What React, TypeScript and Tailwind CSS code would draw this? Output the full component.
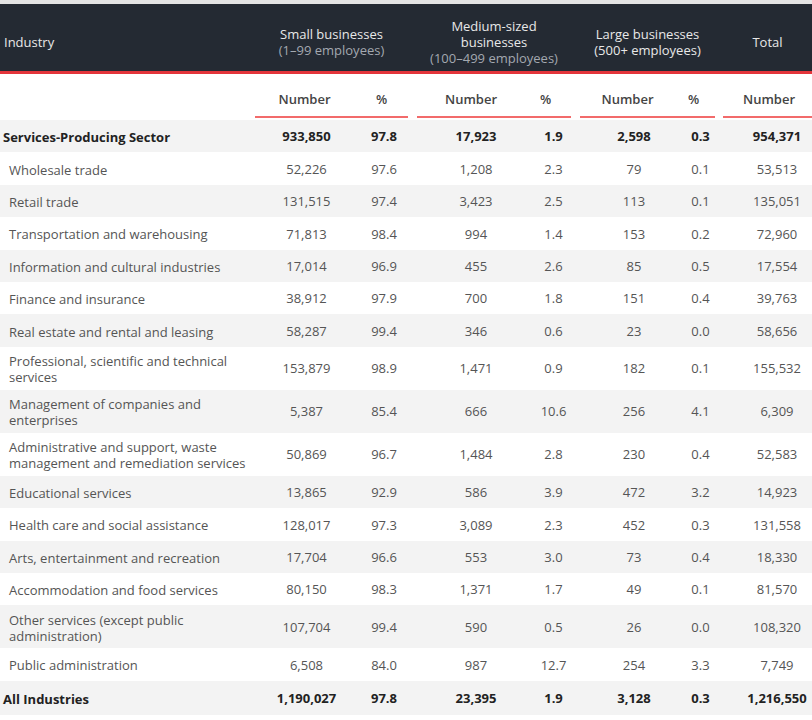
import React from "react";

type Row = {
  label: string;
  bold?: boolean;
  double?: boolean;
  v: [string, string, string, string, string, string, string];
};

const rows: Row[] = [
  { label: "Services-Producing Sector", bold: true, v: ["933,850", "97.8", "17,923", "1.9", "2,598", "0.3", "954,371"] },
  { label: "Wholesale trade", v: ["52,226", "97.6", "1,208", "2.3", "79", "0.1", "53,513"] },
  { label: "Retail trade", v: ["131,515", "97.4", "3,423", "2.5", "113", "0.1", "135,051"] },
  { label: "Transportation and warehousing", v: ["71,813", "98.4", "994", "1.4", "153", "0.2", "72,960"] },
  { label: "Information and cultural industries", v: ["17,014", "96.9", "455", "2.6", "85", "0.5", "17,554"] },
  { label: "Finance and insurance", v: ["38,912", "97.9", "700", "1.8", "151", "0.4", "39,763"] },
  { label: "Real estate and rental and leasing", v: ["58,287", "99.4", "346", "0.6", "23", "0.0", "58,656"] },
  { label: "Professional, scientific and technical services", double: true, v: ["153,879", "98.9", "1,471", "0.9", "182", "0.1", "155,532"] },
  { label: "Management of companies and enterprises", double: true, v: ["5,387", "85.4", "666", "10.6", "256", "4.1", "6,309"] },
  { label: "Administrative and support, waste management and remediation services", double: true, v: ["50,869", "96.7", "1,484", "2.8", "230", "0.4", "52,583"] },
  { label: "Educational services", v: ["13,865", "92.9", "586", "3.9", "472", "3.2", "14,923"] },
  { label: "Health care and social assistance", v: ["128,017", "97.3", "3,089", "2.3", "452", "0.3", "131,558"] },
  { label: "Arts, entertainment and recreation", v: ["17,704", "96.6", "553", "3.0", "73", "0.4", "18,330"] },
  { label: "Accommodation and food services", v: ["80,150", "98.3", "1,371", "1.7", "49", "0.1", "81,570"] },
  { label: "Other services (except public administration)", double: true, v: ["107,704", "99.4", "590", "0.5", "26", "0.0", "108,320"] },
  { label: "Public administration", v: ["6,508", "84.0", "987", "12.7", "254", "3.3", "7,749"] },
  { label: "All Industries", bold: true, v: ["1,190,027", "97.8", "23,395", "1.9", "3,128", "0.3", "1,216,550"] },
];

const groupCols = "grid grid-cols-[255px_153px_9px_154px_9px_135px_8px_89px]";
const dataCols = "grid grid-cols-[255px_103px_50px_9px_115px_39px_9px_92px_43px_8px_89px]";

// little offsets so the numbers sit where the original puts them
const dataPad = ["", "pl-[2px]", "pl-[3px]", "pl-[4px]", "pl-[16px]", "pl-[14px]", "pl-[19px]"];

function SubHead({ cells }: { cells: { text: string; w: string; pad: string }[] }) {
  return (
    <div className="flex flex-col border-b-2 border-[#f26b6b] pb-[8px]">
      <div className="flex">
        {cells.map((c) => (
          <div key={c.text} className={`${c.w} ${c.pad} text-center leading-[18px]`}>
            {c.text}
          </div>
        ))}
      </div>
    </div>
  );
}

export default function App() {
  return (
    <div className="w-[812px] bg-white font-['Open_Sans',sans-serif] text-[13px] text-[#555]">
      <div className="h-[4px] bg-[#e4e4e4]" />

      {/* dark header */}
      <div className={`${groupCols} h-[70px] bg-[#242a33] border-b-[3px] border-[#e3353b] pt-[8px] items-center leading-[16px] text-[#e8e8e8]`}>
        <div className="pl-[4px]">Industry</div>
        <div className="px-2 text-center">
          <div>Small businesses</div>
          <div className="text-[#a3a8b0]">(1–99 employees)</div>
        </div>
        <div />
        <div className="px-2 text-center">
          <div>Medium-sized businesses</div>
          <div className="text-[#a3a8b0]">(100–499 employees)</div>
        </div>
        <div />
        <div className="px-2 text-center">
          <div>Large businesses</div>
          <div>(500+ employees)</div>
        </div>
        <div />
        <div className="text-center">Total</div>
      </div>

      {/* sub header */}
      <div className={`${groupCols} h-[46px] items-end pb-[2px] font-semibold text-[#444]`}>
        <div />
        <SubHead
          cells={[
            { text: "Number", w: "w-[103px]", pad: "pr-[4px]" },
            { text: "%", w: "w-[50px]", pad: "pr-[3px]" },
          ]}
        />
        <div />
        <SubHead
          cells={[
            { text: "Number", w: "w-[115px]", pad: "pr-[7px]" },
            { text: "%", w: "w-[39px]", pad: "pr-[12px]" },
          ]}
        />
        <div />
        <SubHead
          cells={[
            { text: "Number", w: "w-[92px]", pad: "pl-[3px]" },
            { text: "%", w: "w-[43px]", pad: "" },
          ]}
        />
        <div />
        <SubHead cells={[{ text: "Number", w: "w-[89px]", pad: "pl-[3px]" }]} />
      </div>

      {/* body */}
      {rows.map((r, i) => {
        const last = i === rows.length - 1;
        const h = r.double ? "h-[43px] pt-[2px]" : last ? "h-[34px] pt-[3px]" : "h-[32.4px] pt-[2px]";
        const bg = i % 2 === 0 ? "bg-[#f3f3f3]" : "bg-white";
        const weight = r.bold ? "font-bold text-[#222]" : "";
        const v = r.v;
        return (
          <div key={r.label} className={`${dataCols} ${h} ${bg} ${weight} items-center`}>
            <div className={`${r.bold ? "pl-[3px]" : "pl-[9px]"} pr-[4px] leading-[16px]`}>{r.label}</div>
            <div className={`text-center ${dataPad[0]}`}>{v[0]}</div>
            <div className={`text-center ${dataPad[1]}`}>{v[1]}</div>
            <div />
            <div className={`text-center ${dataPad[2]}`}>{v[2]}</div>
            <div className={`text-center ${dataPad[3]}`}>{v[3]}</div>
            <div />
            <div className={`text-center ${dataPad[4]}`}>{v[4]}</div>
            <div className={`text-center ${dataPad[5]}`}>{v[5]}</div>
            <div />
            <div className={`text-center ${dataPad[6]}`}>{v[6]}</div>
          </div>
        );
      })}
    </div>
  );
}
